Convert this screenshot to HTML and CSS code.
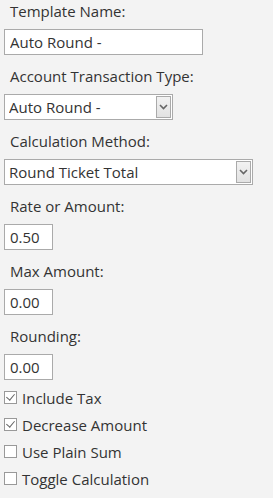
FILE: index.html
```html
<!DOCTYPE html>
<html lang="en">
<head>
    <meta charset="UTF-8">
    <meta name="viewport" content="width=device-width, initial-scale=1.0">
    <title>Template</title>
    <link rel="stylesheet" href="styles.css">
</head>
<body>
    <div class="formPanel">
        <!-- text fields and selects -->
        <div class="fieldGroup">
            <div class="field">
                <label class="fieldLabel" for="templateName">Template Name:</label>
                <input type="text" id="templateName" class="textBox wide" value="Auto Round -">
            </div>
            <div class="field">
                <label class="fieldLabel" for="accountType">Account Transaction Type:</label>
                <div class="selectBox medium">
                    <select id="accountType">
                        <option>Auto Round -</option>
                    </select>
                    <span class="dropButton">
                        <svg width="9" height="6" viewBox="0 0 9 6"><path d="M1 1 L4.5 4.5 L8 1" fill="none" stroke="#666" stroke-width="1.6"/></svg>
                    </span>
                </div>
            </div>
            <div class="field">
                <label class="fieldLabel" for="calcMethod">Calculation Method:</label>
                <div class="selectBox full">
                    <select id="calcMethod">
                        <option>Round Ticket Total</option>
                    </select>
                    <span class="dropButton">
                        <svg width="9" height="6" viewBox="0 0 9 6"><path d="M1 1 L4.5 4.5 L8 1" fill="none" stroke="#666" stroke-width="1.6"/></svg>
                    </span>
                </div>
            </div>
            <div class="field">
                <label class="fieldLabel" for="rate">Rate or Amount:</label>
                <input type="text" id="rate" class="textBox small" value="0.50">
            </div>
            <div class="field">
                <label class="fieldLabel" for="maxAmount">Max Amount:</label>
                <input type="text" id="maxAmount" class="textBox small" value="0.00">
            </div>
            <div class="field">
                <label class="fieldLabel" for="rounding">Rounding:</label>
                <input type="text" id="rounding" class="textBox small" value="0.00">
            </div>
        </div>

        <!-- options -->
        <div class="checkList">
            <label class="checkRow"><input type="checkbox" checked> Include Tax</label>
            <label class="checkRow"><input type="checkbox" checked> Decrease Amount</label>
            <label class="checkRow"><input type="checkbox"> Use Plain Sum</label>
            <label class="checkRow"><input type="checkbox"> Toggle Calculation</label>
        </div>
    </div>
</body>
</html>
```

FILE: styles.css
```css
body {
    font-family: "Open Sans", "Noto Sans", sans-serif;
    font-size: 15px;
    color: #333;
    background-color: #f3f3f3;
    margin: 0;
    padding: 0;
}

.formPanel {
    padding: 1px 4px 0 4px;
}

.field {
    margin-bottom: 11px;
}

.field:last-child {
    margin-bottom: 0;
}

.fieldLabel {
    display: block;
    padding-left: 6px;
    line-height: 20px;
    margin-bottom: 8px;
}

.textBox,
.selectBox select {
    box-sizing: border-box;
    height: 26px;
    border: 1px solid #aaa;
    background-color: #fff;
    font-family: inherit;
    font-size: 15px;
    color: #333;
    padding: 0 5px;
    margin: 0;
    outline: none;
}

.textBox {
    display: block;
}

.wide {
    width: 199px;
}

.small {
    width: 49px;
}

.selectBox {
    position: relative;
}

.selectBox select {
    appearance: none;
    -webkit-appearance: none;
    width: 100%;
    border-radius: 0;
    padding-left: 4px;
}

.medium {
    width: 169px;
}

.full {
    width: 249px;
}

.dropButton {
    position: absolute;
    top: 2px;
    right: 2px;
    width: 15px;
    height: 22px;
    box-sizing: border-box;
    border: 1px solid #aaa;
    background: linear-gradient(#f2f2f2, #e2e2e2);
    display: flex;
    align-items: center;
    justify-content: center;
    pointer-events: none;
}

.checkList {
    margin-top: 4px;
}

.checkRow {
    display: flex;
    align-items: center;
    height: 27px;
    gap: 5px;
}

.checkRow input {
    appearance: none;
    -webkit-appearance: none;
    width: 13px;
    height: 13px;
    margin: 0;
    border: 1px solid #999;
    background-color: #fff;
    position: relative;
    flex-shrink: 0;
}

.checkRow input:checked::after {
    content: "";
    position: absolute;
    left: 3px;
    top: 0px;
    width: 4px;
    height: 7px;
    border-right: 1.5px solid #666;
    border-bottom: 1.5px solid #666;
    transform: rotate(40deg);
}
```
